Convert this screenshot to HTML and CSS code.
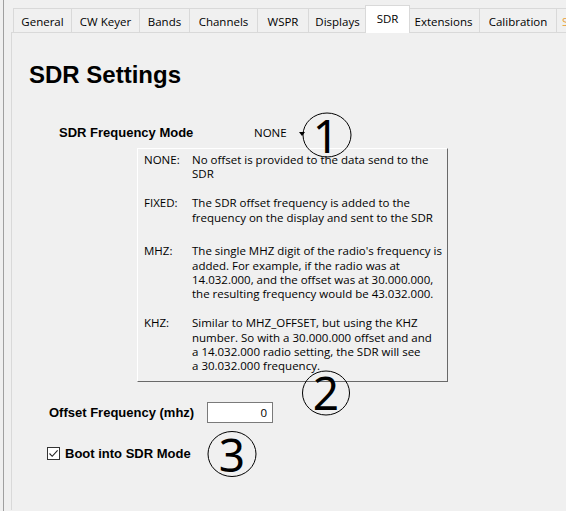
FILE: index.html
```html
<!DOCTYPE html>
<html>
<head>
<meta charset="utf-8">
<link rel="stylesheet" href="styles.css">
</head>
<body>
<div class="window">
  <div class="tabs">
    <div class="tab tab-first w-general">General</div>
    <div class="tab w-cw">CW Keyer</div>
    <div class="tab w-bands">Bands</div>
    <div class="tab w-channels">Channels</div>
    <div class="tab w-wspr">WSPR</div>
    <div class="tab w-displays">Displays</div>
    <div class="tab tab-active w-sdr">SDR</div>
    <div class="tab w-ext">Extensions</div>
    <div class="tab w-cal">Calibration</div>
    <div class="tab tab-more w-more">Setup</div>
  </div>
  <div class="panel">
    <h1 class="title">SDR Settings</h1>
    <div class="mode-row">
      <span class="field-label mode-label">SDR Frequency Mode</span>
      <span class="combo">NONE<span class="combo-arrow"></span></span>
    </div>
    <div class="help">
      <div class="help-item">
        <span class="help-key">NONE:</span>
        <span class="help-text">No offset is provided to the data send to the<br>SDR</span>
      </div>
      <div class="help-item">
        <span class="help-key">FIXED:</span>
        <span class="help-text">The SDR offset frequency is added to the<br>frequency on the display and sent to the SDR</span>
      </div>
      <div class="help-item help-mhz">
        <span class="help-key">MHZ:</span>
        <span class="help-text">The single MHZ digit of the radio's frequency is<br>added. For example, if the radio was at<br>14.032.000, and the offset was at 30.000.000,<br>the resulting frequency would be 43.032.000.</span>
      </div>
      <div class="help-item">
        <span class="help-key">KHZ:</span>
        <span class="help-text">Similar to MHZ_OFFSET, but using the KHZ<br>number. So with a 30.000.000 offset and and<br>a 14.032.000 radio setting, the SDR will see<br>a 30.032.000 frequency.</span>
      </div>
    </div>
    <div class="offset-row">
      <span class="field-label offset-label">Offset Frequency (mhz)</span>
      <span class="input">0</span>
    </div>
    <div class="check-row">
      <span class="checkbox"><svg width="11" height="11" viewBox="0 0 11 11"><path d="M1.5 5.5 L4.2 8.3 L9.6 2.4" fill="none" stroke="#222" stroke-width="1.1"/></svg></span>
      <span class="field-label">Boot into SDR Mode</span>
    </div>
  </div>
</div>

<svg class="mark mark-1" width="50" height="46" viewBox="0 0 50 46"><ellipse cx="25" cy="23" rx="24" ry="22" fill="none" stroke="#000" stroke-width="1"/><text x="24" y="41" text-anchor="middle" class="mark-digit">1</text></svg>
<svg class="mark mark-2" width="50" height="46" viewBox="0 0 50 46"><ellipse cx="25" cy="23" rx="23.5" ry="22" fill="none" stroke="#000" stroke-width="1"/><text x="25" y="40" text-anchor="middle" class="mark-digit">2</text></svg>
<svg class="mark mark-3" width="50" height="46" viewBox="0 0 50 46"><ellipse cx="25" cy="23" rx="24" ry="22.5" fill="none" stroke="#000" stroke-width="1"/><text x="25" y="41" text-anchor="middle" class="mark-digit">3</text></svg>
</body>
</html>
```
FILE: styles.css
```css
html {
  overflow: hidden;
}
body {
  margin: 0;
  width: 566px;
  height: 511px;
  overflow: hidden;
  position: relative;
  background: #f0f0f0;
  font-family: "Open Sans", "Noto Sans", sans-serif;
  color: #000;
}
.window {
  margin-left: 3px;
  border-left: 1px solid #a0a0a0;
  padding-left: 7px;
  height: 511px;
  width: 680px;
  box-sizing: border-box;
}
.tabs {
  display: flex;
  align-items: flex-end;
  height: 27px;
  padding-top: 5px;
  margin-left: 2px;
}
.tab {
  box-sizing: border-box;
  flex-shrink: 0;
  height: 24px;
  padding-top: 5px;
  border-top: 1px solid #d9d9d9;
  border-right: 1px solid #d9d9d9;
  background: #f0f0f0;
  font-size: 11.5px;
  line-height: 16px;
  text-align: center;
  white-space: nowrap;
  overflow: hidden;
}
.tab-first {
  border-left: 1px solid #d9d9d9;
}
.tab-active {
  height: 28px;
  margin: 0 -2px -1px;
  padding-top: 5px;
  border-left: 1px solid #d9d9d9;
  background: #fff;
  position: relative;
  z-index: 1;
}
.tab-more {
  text-align: left;
  padding-left: 5px;
  color: #e9a13a;
}
.w-general { width: 59px; }
.w-cw { width: 68px; }
.w-bands { width: 50px; }
.w-channels { width: 68px; }
.w-wspr { width: 51px; }
.w-displays { width: 58px; }
.w-sdr { width: 45px; }
.w-ext { width: 72px; }
.w-cal { width: 77px; }
.w-more { width: 60px; }

.panel {
  border-top: 1px solid #d9d9d9;
  border-left: 1px solid #d9d9d9;
  height: 478px;
  box-sizing: border-box;
}
.title {
  margin: 30px 0 0 17px;
  font-family: "Liberation Sans", Arial, sans-serif;
  font-weight: bold;
  font-size: 24px;
  line-height: 24px;
}
.field-label {
  font-family: "Liberation Sans", Arial, sans-serif;
  font-weight: bold;
  font-size: 13px;
  line-height: 16px;
  white-space: nowrap;
}
.mode-row {
  display: flex;
  align-items: center;
  height: 16px;
  margin: 38px 0 0 47px;
}
.mode-label {
  width: 195px;
}
.combo {
  display: flex;
  align-items: center;
  font-size: 11.5px;
  line-height: 16px;
}
.combo-arrow {
  margin-left: 12px;
  margin-top: 1px;
  width: 0;
  height: 0;
  border-left: 3.5px solid transparent;
  border-right: 3.5px solid transparent;
  border-top: 4px solid #000;
}
.help {
  margin: 7px 0 0 125px;
  width: 311px;
  height: 234px;
  box-sizing: border-box;
  border-top: 1px solid #fff;
  border-left: 1px solid #fff;
  border-right: 1px solid #696969;
  border-bottom: 1px solid #696969;
  padding: 4px 6px 6px 6px;
  font-size: 11.5px;
  line-height: 14.4px;
}
.help-item {
  display: grid;
  grid-template-columns: 48px 1fr;
  margin-top: 14.5px;
  white-space: nowrap;
}
.help-item:first-child {
  margin-top: 0;
}
.help-mhz {
  margin-top: 19px;
}
.offset-row {
  display: flex;
  align-items: center;
  height: 21px;
  margin: 20px 0 0 37px;
}
.offset-label {
  width: 158px;
}
.input {
  width: 66px;
  height: 21px;
  box-sizing: border-box;
  border: 1px solid #7a7a7a;
  background: #fff;
  text-align: right;
  padding-right: 5px;
  font-size: 11.5px;
  line-height: 19px;
}
.check-row {
  display: flex;
  align-items: center;
  height: 13px;
  margin: 24px 0 0 35px;
}
.checkbox {
  width: 13px;
  height: 13px;
  box-sizing: border-box;
  border: 1px solid #333;
  background: #fff;
  margin-right: 5px;
  display: flex;
}
.mark {
  position: absolute;
  overflow: visible;
}
.mark-1 { left: 302px; top: 112px; }
.mark-2 { left: 301px; top: 370px; }
.mark-3 { left: 207px; top: 431px; }
.mark-digit {
  font-family: "Noto Sans", "Liberation Sans", sans-serif;
  font-weight: 400;
  font-size: 46px;
  fill: #000;
}
```
